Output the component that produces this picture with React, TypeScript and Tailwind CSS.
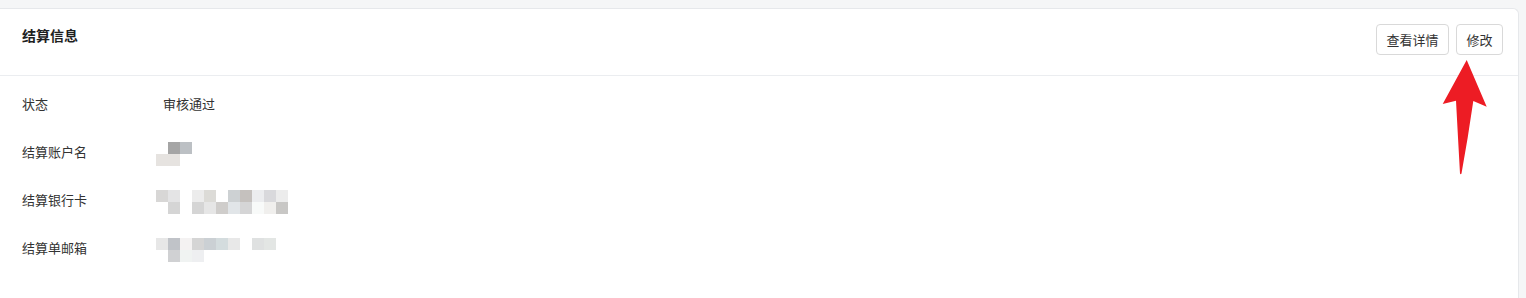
import React from 'react';

type Cell = string | null;

const FONT = "font-['Noto_Sans_CJK_SC','Noto_Sans',sans-serif]";

// 打码块，每格 12px
const accountName: Cell[][] = [
  [null, 'bg-[#a5a5a5]', 'bg-[#bcc0c4]'],
  ['bg-[#e6e3e0]', 'bg-[#e6e3e0]', null],
];

const bankCard: Cell[][] = [
  ['bg-[#d8d7d6]', 'bg-[#e4e4e5]', null, 'bg-[#ececec]', 'bg-[#dcdbd7]', null, 'bg-[#cdd1d3]', 'bg-[#c5c1be]', 'bg-[#ecedef]', 'bg-[#d9d9dc]', 'bg-[#ececec]'],
  [null, 'bg-[#d5d5d5]', null, 'bg-[#d5d5d5]', 'bg-[#e6e6e6]', 'bg-[#cfcdcb]', 'bg-[#e1e5e8]', 'bg-[#d5d5d6]', 'bg-[#f8faf9]', 'bg-[#f0efed]', 'bg-[#c8c7c5]'],
];

const email: Cell[][] = [
  ['bg-[#e7e7e7]', 'bg-[#c0c3c8]', 'bg-[#f4f2f2]', 'bg-[#d5d5d5]', 'bg-[#cbd0d4]', 'bg-[#d4dcde]', 'bg-[#e8e8e8]', null, 'bg-[#dfe1e1]', 'bg-[#e3e6e4]'],
  [null, 'bg-[#d0d1d3]', 'bg-[#f0f3f2]', 'bg-[#eeeff1]'],
];

function Mosaic({ cells }: { cells: Cell[][] }) {
  return (
    <div className="ml-[-7px] mt-[1px] flex flex-col">
      {cells.map((row, r) => (
        <div key={r} className="flex">
          {row.map((c, i) => (
            <div key={i} className={`h-[12px] w-[12px] ${c ?? ''}`} />
          ))}
        </div>
      ))}
    </div>
  );
}

function Row({ label, children }: { label: string; children: React.ReactNode }) {
  return (
    <div className="flex h-[22px] items-start">
      <div className="w-[141px] text-[13px] leading-[22px] text-[#333]">{label}</div>
      <div className="text-[13px] leading-[22px] text-[#333]">{children}</div>
    </div>
  );
}

export default function App() {
  return (
    <div className={`relative h-[298px] w-[1526px] overflow-hidden bg-[#f5f6f7] pr-[7px] pt-[8px] ${FONT}`}>
      <div className="h-[320px] rounded-tr-[6px] border-r border-t border-[#e6e8eb] bg-white">
        {/* 头部 */}
        <div className="flex h-[67px] items-start justify-between border-b border-[#ebedf0] pl-[22px] pr-[15px] pt-[15px]">
          <div className="text-[14px] font-bold leading-[22px] text-[#1f1f1f]">结算信息</div>
          <div className="flex gap-[7px]">
            <button className="h-[31px] w-[73px] rounded-[4px] border border-[#d9d9d9] bg-white text-[13px] text-[#333]">
              查看详情
            </button>
            <button className="h-[31px] w-[47px] rounded-[4px] border border-[#d9d9d9] bg-white text-[13px] text-[#333]">
              修改
            </button>
          </div>
        </div>

        {/* 内容 */}
        <div className="flex flex-col gap-[26px] pl-[22px] pt-[17px]">
          <Row label="状态">审核通过</Row>
          <Row label="结算账户名">
            <Mosaic cells={accountName} />
          </Row>
          <Row label="结算银行卡">
            <Mosaic cells={bankCard} />
          </Row>
          <Row label="结算单邮箱">
            <Mosaic cells={email} />
          </Row>
        </div>
      </div>

      {/* 红色箭头标注 */}
      <svg className="absolute left-[1440px] top-[58px]" width="50" height="120" viewBox="0 0 50 120">
        <path
          d="M26.7 2 L46.7 48.7 L33.3 43 Q28 80 21.5 115.5 Q20.7 117 20 115.5 Q18 80 16 42.7 L2.7 46 Z"
          fill="#ed1c24"
        />
      </svg>
    </div>
  );
}
